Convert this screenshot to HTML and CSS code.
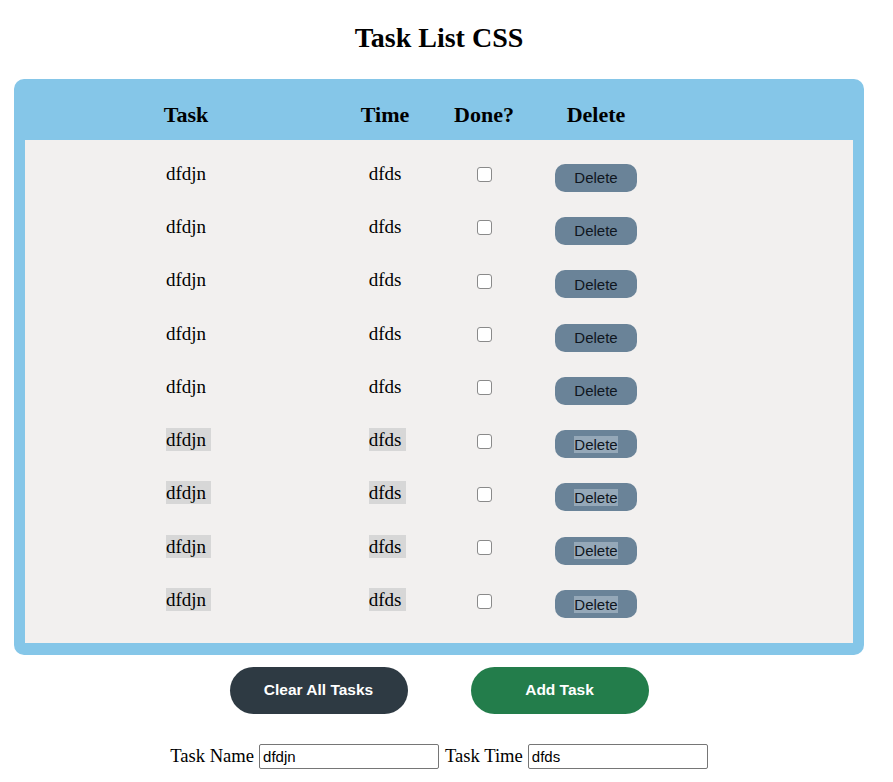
FILE: index.html
```html
<!DOCTYPE html>
<html lang="en">
<head>
<meta charset="utf-8">
<title>Task List CSS</title>
<link rel="stylesheet" href="styles.css">
</head>
<body>
<div class="page">
  <h1 class="title">Task List CSS</h1>
  <div class="board">
    <div class="cols head">
      <div>Task</div>
      <div>Time</div>
      <div>Done?</div>
      <div>Delete</div>
    </div>
    <div class="panel">
      <div class="cols row"><div>dfdjn</div><div>dfds</div><div><input type="checkbox" class="check"></div><div><button class="del">Delete</button></div></div>
      <div class="cols row"><div>dfdjn</div><div>dfds</div><div><input type="checkbox" class="check"></div><div><button class="del">Delete</button></div></div>
      <div class="cols row"><div>dfdjn</div><div>dfds</div><div><input type="checkbox" class="check"></div><div><button class="del">Delete</button></div></div>
      <div class="cols row"><div>dfdjn</div><div>dfds</div><div><input type="checkbox" class="check"></div><div><button class="del">Delete</button></div></div>
      <div class="cols row"><div>dfdjn</div><div>dfds</div><div><input type="checkbox" class="check"></div><div><button class="del">Delete</button></div></div>
      <div class="cols row"><div><span class="sel">dfdjn</span></div><div><span class="sel">dfds</span></div><div><input type="checkbox" class="check"></div><div><button class="del"><span class="sel-btn">Delete</span></button></div></div>
      <div class="cols row"><div><span class="sel">dfdjn</span></div><div><span class="sel">dfds</span></div><div><input type="checkbox" class="check"></div><div><button class="del"><span class="sel-btn">Delete</span></button></div></div>
      <div class="cols row"><div><span class="sel">dfdjn</span></div><div><span class="sel">dfds</span></div><div><input type="checkbox" class="check"></div><div><button class="del"><span class="sel-btn">Delete</span></button></div></div>
      <div class="cols row"><div><span class="sel">dfdjn</span></div><div><span class="sel">dfds</span></div><div><input type="checkbox" class="check"></div><div><button class="del"><span class="sel-btn">Delete</span></button></div></div>
    </div>
  </div>
  <div class="actions">
    <button class="pill clear">Clear All Tasks</button>
    <button class="pill add">Add Task</button>
  </div>
  <div class="form">
    <label class="lbl" for="tn">Task Name</label>
    <input id="tn" class="field" type="text" value="dfdjn">
    <label class="lbl" for="tt">Task Time</label>
    <input id="tt" class="field" type="text" value="dfds">
  </div>
</div>
</body>
</html>
```

FILE: styles.css
```css
html, body {
  margin: 0;
  padding: 0;
  background: #ffffff;
}

body {
  font-family: "Liberation Serif", "Times New Roman", serif;
  color: #000;
}

.page {
  width: 850px;
  margin-left: 14px;
  padding-top: 22px;
}

.title {
  margin: 0;
  height: 32px;
  line-height: 32px;
  font-size: 28px;
  font-weight: bold;
  text-align: center;
}

.board {
  margin-top: 25px;
  background: #85c6e8;
  border-radius: 10px;
  padding: 0 11px 12px;
}

.cols {
  display: grid;
  grid-template-columns: 322px 76px 122px 102px 1fr;
  align-items: center;
  justify-items: center;
}

.head {
  height: 50px;
  padding-top: 11px;
  font-size: 22px;
  font-weight: bold;
}

.panel {
  background: #f2f0ef;
  padding: 7px 0 16px;
}

.row {
  height: 53.3px;
  font-size: 19px;
}

.sel {
  background: #d7d7d7;
  padding: 1px 5px 1px 0;
  margin-right: -5px;
}

.check {
  appearance: none;
  -webkit-appearance: none;
  box-sizing: border-box;
  width: 15px;
  height: 15px;
  margin: 2px 0 0 0;
  border: 1px solid #8a8a8a;
  border-radius: 3px;
  background: #ffffff;
  display: block;
}

.del {
  width: 82px;
  height: 28px;
  margin-top: 8px;
  border: none;
  border-radius: 10px;
  background: #6a8398;
  color: #0f1620;
  font-family: "Liberation Sans", Arial, sans-serif;
  font-size: 15px;
  padding: 0;
}

.sel-btn {
  background: #95a8b8;
}

.actions {
  margin-top: 12px;
  display: flex;
  justify-content: center;
  gap: 63px;
}

.pill {
  width: 178px;
  height: 47px;
  border: none;
  border-radius: 24px;
  color: #ffffff;
  font-family: "Liberation Sans", Arial, sans-serif;
  font-weight: bold;
  font-size: 15.5px;
  padding: 0;
}

.clear {
  background: #2e3a43;
}

.add {
  background: #237d4b;
}

.form {
  margin-top: 30px;
  display: flex;
  justify-content: center;
  align-items: center;
  height: 25px;
  font-size: 18.6px;
}

.lbl {
  margin-right: 5px;
}

.field {
  box-sizing: border-box;
  width: 180px;
  height: 25px;
  margin: 0 6px 0 0;
  border: 1px solid #767676;
  border-radius: 2px;
  padding: 1px 3px;
  font-family: "Liberation Sans", Arial, sans-serif;
  font-size: 15px;
  color: #000;
  background: #fff;
}

.field:last-child {
  margin-right: 0;
}
```
